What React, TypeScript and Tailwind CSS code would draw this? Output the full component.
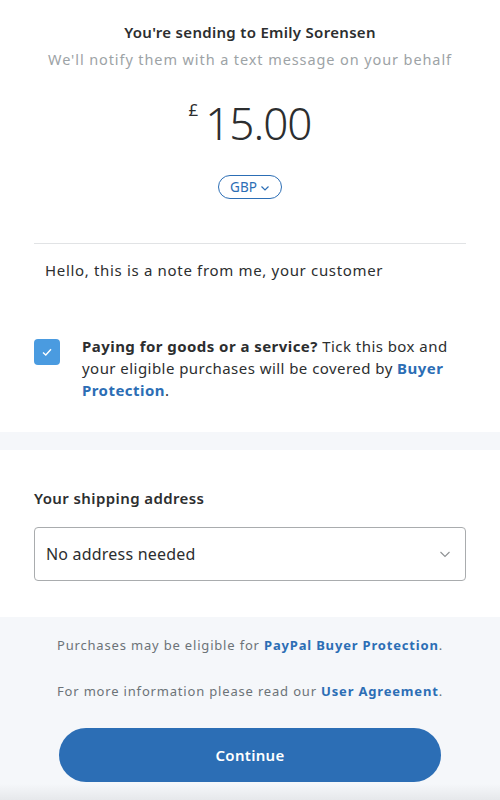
import React from 'react';

const App: React.FC = () => {
  return (
    <div className="w-[500px] h-[800px] overflow-hidden bg-white text-[#2c2e2f] flex flex-col" style={{ fontFamily: '"Noto Sans", "Open Sans", sans-serif' }}>
      <div className="px-[34px] pt-[20px] flex flex-col items-center">
        <h1 className="text-[15px] font-semibold tracking-[0.3px] leading-[24px]">You're sending to Emily Sorensen</h1>
        <p className="mt-[4px] text-[14.5px] text-[#9da3a6] tracking-[0.9px] leading-[22px]">We'll notify them with a text message on your behalf</p>
        <div className="mt-[25px] flex items-start">
          <span className="text-[17px] leading-none mt-[6px] mr-[7px] text-[#2c2e2f]">£</span>
          <span className="text-[44px] font-light leading-[56px] tracking-[-1px]">15.00</span>
        </div>
        <button className="mt-[24px] h-[24px] px-[11px] rounded-full border border-[#2c6eb5] text-[#2c6eb5] text-[13.5px] flex items-center gap-[3px]">
          GBP
          <svg width="10" height="10" viewBox="0 0 10 10" fill="none" stroke="currentColor" strokeWidth="1.2" className="mt-[2px]">
            <path d="M1.5 3.5 L5 7 L8.5 3.5" />
          </svg>
        </button>
        <div className="w-full mt-[44px] border-t border-[#e1e3e5]" />
        <p className="w-full mt-[15px] px-[11px] text-[15px] tracking-[0.67px] leading-[22px]">Hello, this is a note from me, your customer</p>
        <div className="w-full mt-[54px] flex gap-[22px]">
          <div className="w-[26px] h-[26px] rounded-[4px] bg-[#4a9be0] flex items-center justify-center mt-[4px] shrink-0">
            <svg width="12" height="12" viewBox="0 0 12 12" fill="none" stroke="white" strokeWidth="1.4">
              <path d="M2 6.5 L4.8 9 L10 3.2" />
            </svg>
          </div>
          <p className="text-[15px] tracking-[0.45px] leading-[22px]">
            <span className="font-bold">Paying for goods or a service?</span> Tick this box and your eligible purchases will be covered by <span className="font-bold text-[#2c6eb5]">Buyer Protection</span>.
          </p>
        </div>
      </div>
      <div className="mt-[31px] h-[18px] bg-[#f5f7fa]" />
      <div className="px-[34px] pt-[37px] pb-[36px]">
        <h2 className="text-[15px] font-semibold tracking-[0.4px] leading-[22px]">Your shipping address</h2>
        <div className="mt-[18px] h-[54px] rounded-[4px] border border-[#a9acae] flex items-center justify-between pl-[11px] pr-[14px]">
          <span className="text-[16px] tracking-[0.2px]">No address needed</span>
          <svg width="12" height="12" viewBox="0 0 12 12" fill="none" stroke="#8e9193" strokeWidth="1.1">
            <path d="M1.5 4 L6 8.5 L10.5 4" />
          </svg>
        </div>
      </div>
      <div className="flex-1 bg-[#f5f7fa] flex flex-col items-center pt-[18px] relative">
        <p className="text-[13px] text-[#6c7378] tracking-[0.82px] leading-[20px]">
          Purchases may be eligible for <span className="font-bold text-[#2c6eb5]">PayPal Buyer Protection</span>.
        </p>
        <p className="mt-[26px] text-[13px] text-[#6c7378] tracking-[0.82px] leading-[20px]">
          For more information please read our <span className="font-bold text-[#2c6eb5]">User Agreement</span>.
        </p>
        <button className="mt-[27px] w-[382px] h-[54px] rounded-full bg-[#2c6eb5] text-white text-[15px] font-semibold tracking-[0.3px]">
          Continue
        </button>
        <div className="absolute left-0 right-0 bottom-0 h-[16px] bg-gradient-to-b from-[#f5f7fa] to-[#e6e8eb]" />
      </div>
    </div>
  );
};

export default App;
